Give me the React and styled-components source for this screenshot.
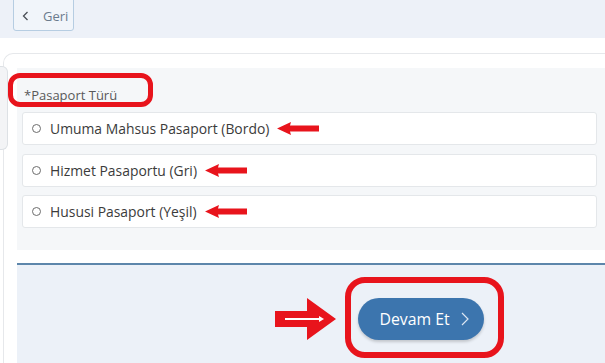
import React, { useState } from 'react'
import styled, { createGlobalStyle } from 'styled-components'

const GlobalStyle = createGlobalStyle`
	* { box-sizing: border-box; }
	body {
		margin: 0;
		background: #ffffff;
		font-family: "Open Sans", "Liberation Sans", sans-serif;
		overflow: hidden;
	}
`

const options = [
	{ id: 'bordo', text: 'Umuma Mahsus Pasaport (Bordo)' },
	{ id: 'gri', text: 'Hizmet Pasaportu (Gri)' },
	{ id: 'yesil', text: 'Hususi Pasaport (Yeşil)' },
]

const LeftArrow = () => (
	<svg width="42" height="13" viewBox="0 0 42 13">
		<polygon points="0,6.5 14,0 13,3.5 42,3.5 42,9.5 13,9.5 14,13" fill="#e8141c" />
	</svg>
)

const RightArrow = () => (
	<svg width="61" height="42" viewBox="0 0 61 42">
		<polygon points="0,13 32,13 32,0 61,21 32,42 32,29 0,29" fill="#e8141c" />
		<line x1="10" y1="21" x2="44" y2="21" stroke="#ffffff" strokeWidth="2" />
		<polygon points="44,18 49,21 44,24" fill="#ffffff" />
	</svg>
)

export default function App() {
	const [selected, setSelected] = useState(null)

	return (
		<>
			<GlobalStyle />
			<Header>
				<BackButton>
					<svg width="7" height="10" viewBox="0 0 7 10">
						<polyline points="5.5,1 1.5,5 5.5,9" fill="none" stroke="#4a4f55" strokeWidth="1.3" />
					</svg>
					<span>Geri</span>
				</BackButton>
			</Header>
			<Main>
				<SideTab />
				<Card>
					<Panel>
						<Label>
							*Pasaport Türü
							<Highlight $left={-14} $top={-13} $width={145} $height={34} $radius={12} />
						</Label>
						<OptionList>
							{options.map((option) => (
								<Option key={option.id} onClick={() => setSelected(option.id)}>
									<Radio $checked={selected === option.id} />
									<span>{option.text}</span>
									<LeftArrow />
								</Option>
							))}
						</OptionList>
					</Panel>
					<Divider />
					<Footer>
						<RightArrow />
						<ButtonWrap>
							<ContinueButton>
								Devam Et
								<svg width="8" height="14" viewBox="0 0 8 14">
									<polyline points="1,1 7,7 1,13" fill="none" stroke="#dbe6f2" strokeWidth="1.2" />
								</svg>
							</ContinueButton>
							<Highlight $left={-13} $top={-21} $width={159} $height={81} $radius={20} $stroke={6} />
						</ButtonWrap>
					</Footer>
				</Card>
			</Main>
		</>
	)
}

const Header = styled.div`
	display: flex;
	align-items: flex-start;
	height: 38px;
	background-color: #edf1f8;
	padding-left: 13px;
`

const BackButton = styled.button`
	display: flex;
	align-items: center;
	gap: 14px;
	width: 61px;
	height: 34px;
	margin-top: -3px;
	padding: 3px 0 0 8px;
	border: 1px solid #b6cde2;
	border-radius: 3px;
	background-color: #f1f5fa;
	font-family: inherit;
	font-size: 13px;
	color: #6b7b8d;
	cursor: pointer;
`

const Main = styled.div`
	position: relative;
	padding: 15px 0 0 3px;
`

const SideTab = styled.div`
	position: absolute;
	left: 0;
	top: 28px;
	width: 8px;
	height: 84px;
	background-color: #f3f4f6;
	border: 1px solid #dde1e5;
	border-left: none;
	border-radius: 0 6px 6px 0;
`

const Card = styled.div`
	border: 1px solid #e6e8eb;
	border-right: none;
	border-bottom: none;
	border-radius: 10px 0 0 0;
	padding: 14px 0 0 13px;
	height: 320px;
	display: flex;
	flex-direction: column;
`

const Panel = styled.div`
	background-color: #f5f7f9;
	padding: 18px 8px 22px 5px;
`

const Label = styled.div`
	position: relative;
	padding-left: 2px;
	margin-bottom: 8px;
	font-size: 13px;
	line-height: 18px;
	color: #595959;
`

const Highlight = styled.div`
	position: absolute;
	left: ${(p) => p.$left}px;
	top: ${(p) => p.$top}px;
	width: ${(p) => p.$width}px;
	height: ${(p) => p.$height}px;
	border: ${(p) => p.$stroke || 5}px solid #e8141c;
	border-radius: ${(p) => p.$radius}px;
	pointer-events: none;
`

const OptionList = styled.div`
	display: flex;
	flex-direction: column;
	gap: 8.5px;
`

const Option = styled.div`
	display: flex;
	align-items: center;
	height: 33px;
	padding-left: 9px;
	background-color: #ffffff;
	border: 1px solid #e4e7ea;
	border-radius: 3px;
	font-size: 13.9px;
	color: #3b3b3b;
	cursor: pointer;
	span {
		margin-left: 9px;
		margin-right: 8px;
	}
`

const Radio = styled.div`
	width: 9px;
	height: 9px;
	border-radius: 50%;
	border: 1px solid #6d6d6d;
	background-color: ${(p) => (p.$checked ? '#3b75ae' : '#ffffff')};
`

const Divider = styled.div`
	margin-top: 13px;
	height: 2px;
	background-color: #5d86ab;
`

const Footer = styled.div`
	flex: 1;
	display: flex;
	align-items: flex-start;
	gap: 22px;
	padding: 33px 0 0 258px;
	background-color: #ecf1f8;
`

const ButtonWrap = styled.div`
	position: relative;
`

const ContinueButton = styled.button`
	display: flex;
	align-items: center;
	justify-content: center;
	gap: 11px;
	width: 126px;
	height: 42px;
	padding: 0 0 0 6px;
	border: none;
	border-radius: 21px;
	background-color: #3c75ae;
	box-shadow: 0 2px 3px rgba(0, 0, 0, 0.18);
	font-family: inherit;
	font-size: 15.8px;
	color: #ffffff;
	cursor: pointer;
`
